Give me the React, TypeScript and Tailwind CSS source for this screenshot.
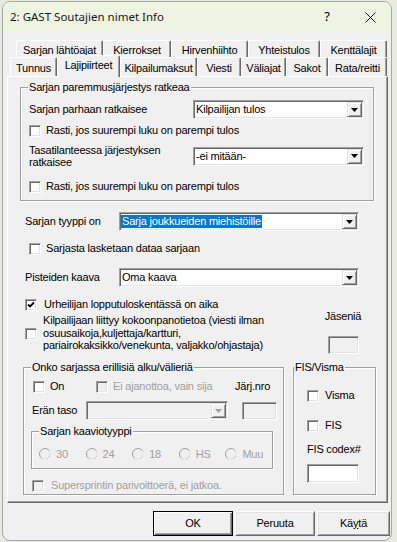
import React from 'react';

const ui = "font-['Liberation_Sans',Arial,sans-serif] text-[11px] tracking-[-0.2px] text-black";

const sunken =
    'border border-t-[#a0a0a0] border-l-[#a0a0a0] border-r-white border-b-white shadow-[inset_1px_1px_0_#696969,inset_-1px_-1px_0_#e3e3e3]';

interface CheckProps {
    checked?: boolean;
    disabled?: boolean;
}

const Check: React.FC<CheckProps> = ({ checked = false, disabled = false }) => (
    <span className={`flex h-[12px] w-[12px] shrink-0 items-center justify-center ${sunken} ${disabled ? 'bg-[#f0f0f0]' : 'bg-white'}`}>
        {checked && (
            <svg width="8" height="8" viewBox="0 0 8 8">
                <path d="M1 3.5l2 2 4-4" fill="none" stroke="#000" strokeWidth="1.8" />
            </svg>
        )}
    </span>
);

interface CheckRowProps extends CheckProps {
    label: string;
    gap: string;
    className?: string;
}

const CheckRow: React.FC<CheckRowProps> = ({ label, gap, className = '', checked, disabled }) => (
    <div className={`flex h-[13px] items-center ${className}`}>
        <Check checked={checked} disabled={disabled} />
        <span className={`${gap} whitespace-nowrap leading-[13px] ${disabled ? 'text-[#a0a0a0]' : ''}`}>{label}</span>
    </div>
);

const Radio: React.FC<{ label: string }> = ({ label }) => (
    <div className="flex w-[47px] items-center">
        <svg width="12" height="12" viewBox="0 0 12 12" className="shrink-0">
            <circle cx="6" cy="6" r="5.5" fill="#f0f0f0" stroke="#a0a0a0" />
            <path d="M10.2 2.6A5 5 0 0 1 2.6 10.2" fill="none" stroke="#fff" />
        </svg>
        <span className="ml-[5px] leading-[12px] text-[#a0a0a0]">{label}</span>
    </div>
);

interface ComboProps {
    text?: string;
    className: string;
    selected?: boolean;
    disabled?: boolean;
}

const Combo: React.FC<ComboProps> = ({ text, className, selected = false, disabled = false }) => (
    <div className={`flex h-[19px] shrink-0 p-px ${sunken} ${disabled ? 'bg-[#f0f0f0]' : 'bg-white'} ${className}`}>
        <div className="flex min-w-0 flex-1 items-center leading-[13px]">
            {text && <span className={`px-px ${selected ? 'bg-[#0078d7] text-white' : ''}`}>{text}</span>}
        </div>
        <div className="flex w-[15px] items-center justify-center border border-t-[#e3e3e3] border-l-[#e3e3e3] border-r-[#696969] border-b-[#696969] bg-[#f0f0f0] shadow-[inset_1px_1px_0_#fff,inset_-1px_-1px_0_#a0a0a0]">
            <svg width="7" height="4" viewBox="0 0 7 4">
                <path d="M0 0h7L3.5 4z" fill={disabled ? '#a0a0a0' : '#000'} />
            </svg>
        </div>
    </div>
);

interface GroupProps {
    title: string;
    className: string;
    legendClass: string;
    children: React.ReactNode;
}

const Group: React.FC<GroupProps> = ({ title, className, legendClass, children }) => (
    <fieldset className={`min-w-0 border border-[#a0a0a0] shadow-[inset_1px_1px_0_#fff,1px_1px_0_#fff] ${className}`}>
        <legend className={`bg-[#f0f0f0] px-px leading-[13px] ${legendClass}`}>{title}</legend>
        {children}
    </fieldset>
);

const Tab: React.FC<{ label: string; w: string; top: string }> = ({ label, w, top }) => (
    <div className={`flex h-full shrink-0 justify-center rounded-t-[2px] border-l border-t border-l-white border-t-white border-r border-r-[#696969] shadow-[inset_-1px_0_0_#a0a0a0] ${top} ${w}`}>
        <span className="whitespace-nowrap leading-[13px]">{label}</span>
    </div>
);

const Button: React.FC<{ children: React.ReactNode; w: string; isDefault?: boolean }> = ({ children, w, isDefault = false }) => (
    <button
        className={`flex h-[25px] items-center justify-center bg-[#f0f0f0] leading-[13px] ${w} ${
            isDefault
                ? 'border border-black shadow-[inset_1px_1px_0_#fff,inset_-1px_-1px_0_#696969,inset_-2px_-2px_0_#a0a0a0]'
                : 'border border-t-white border-l-white border-r-[#696969] border-b-[#696969] shadow-[inset_1px_1px_0_#e3e3e3,inset_-1px_-1px_0_#a0a0a0]'
        }`}
    >
        {children}
    </button>
);

export default function App() {
    const row1 = [
        { label: 'Sarjan lähtöajat', w: 'w-[87px]' },
        { label: 'Kierrokset', w: 'w-[68px]' },
        { label: 'Hirvenhiihto', w: 'w-[77px]' },
        { label: 'Yhteistulos', w: 'w-[72px]' },
        { label: 'Kenttälajit', w: 'w-[67px]' },
    ];
    const row2After = [
        { label: 'Kilpailumaksut', w: 'w-[77px]' },
        { label: 'Viesti', w: 'w-[44px]' },
        { label: 'Väliajat', w: 'w-[45px]' },
        { label: 'Sakot', w: 'w-[42px]' },
        { label: 'Rata/reitti', w: 'w-[59px]' },
    ];

    return (
        <div className={`h-[542px] w-[397px] overflow-hidden bg-[#e8eadf] pl-[2px] pt-px ${ui}`}>
            <div className="flex h-[540px] w-[390px] flex-col overflow-hidden rounded-[8px] border border-[#a8a8a8] bg-[#f0f0f0]">
                {/* Title bar */}
                <div className="flex h-[30px] shrink-0 items-center bg-[#eff3e2] tracking-normal">
                    <span className="flex-1 pl-[7px] font-['Noto_Sans',sans-serif] text-[11.5px] text-[#1a1a1a]">
                        2: GAST Soutajien nimet Info
                    </span>
                    <span className="w-[44px] text-center font-['Noto_Sans',sans-serif] text-[13px]">?</span>
                    <span className="flex w-[42px] justify-center">
                        <svg width="11" height="11" viewBox="0 0 11 11">
                            <path d="M0.5 0.5l10 10M10.5 0.5l-10 10" stroke="#1a1a1a" strokeWidth="1" />
                        </svg>
                    </span>
                </div>

                {/* Tabs */}
                <div className="ml-[13px] mt-[8px] flex h-[17px]">
                    {row1.map((t) => (
                        <Tab key={t.label} label={t.label} w={t.w} top="pt-[3px]" />
                    ))}
                </div>
                <div className="ml-[7px] flex h-[19px]">
                    <Tab label="Tunnus" w="w-[47px]" top="pt-[4px]" />
                    <div className="relative z-10 -mt-[2px] flex h-[22px] w-[63px] shrink-0 justify-center rounded-t-[2px] border-l border-t border-l-white border-t-white border-r border-r-[#696969] bg-[#f0f0f0] pt-[3px] shadow-[inset_-1px_0_0_#a0a0a0]">
                        <span className="whitespace-nowrap leading-[13px]">Lajipiirteet</span>
                    </div>
                    {row2After.map((t) => (
                        <Tab key={t.label} label={t.label} w={t.w} top="pt-[4px]" />
                    ))}
                </div>

                {/* Panel */}
                <div className="ml-[4px] flex h-[427px] w-[381px] flex-col items-start border border-l-white border-t-white border-r-[#696969] border-b-[#696969] shadow-[inset_-1px_-1px_0_#a0a0a0]">
                    <Group title="Sarjan paremmusjärjestys ratkeaa" className="ml-[12px] mt-[4px] w-[354px] pb-[7px]" legendClass="ml-[7px]">
                        <div className="mt-[6px] flex h-[19px] items-center pl-[8px]">
                            <span className="w-[164px] whitespace-nowrap">Sarjan parhaan ratkaisee</span>
                            <Combo text="Kilpailijan tulos" className="w-[171px]" />
                        </div>
                        <CheckRow label="Rasti, jos suurempi luku on parempi tulos" gap="ml-[5px]" className="ml-[8px] mt-[5px]" />
                        <div className="mt-[7px] flex h-[24px] items-center pl-[8px]">
                            <span className="w-[164px] leading-[12px]">
                                Tasatilanteessa järjestyksen
                                <br />
                                ratkaisee
                            </span>
                            <Combo text="-ei mitään-" className="w-[171px]" />
                        </div>
                        <CheckRow label="Rasti, jos suurempi luku on parempi tulos" gap="ml-[5px]" className="ml-[8px] mt-[12px]" />
                    </Group>

                    <div className="ml-[17px] mt-[11px] flex h-[19px] items-center">
                        <span className="w-[94px] whitespace-nowrap">Sarjan tyyppi on</span>
                        <Combo text="Sarja joukkueiden miehistöille" className="w-[240px]" selected />
                    </div>

                    <CheckRow label="Sarjasta lasketaan dataa sarjaan" gap="ml-[5px]" className="ml-[21px] mt-[11px]" />

                    <div className="ml-[17px] mt-[13px] flex h-[19px] items-center">
                        <span className="w-[94px] whitespace-nowrap">Pisteiden kaava</span>
                        <Combo text="Oma kaava" className="w-[240px]" />
                    </div>

                    <CheckRow label="Urheilijan lopputuloskentässä on aika" checked gap="ml-[7px]" className="ml-[17px] mt-[11px]" />

                    <div className="-mt-px ml-[17px] flex">
                        <div className="mt-[18px] self-start">
                            <Check />
                        </div>
                        <span className="ml-[6px] w-[280px] whitespace-nowrap pt-[4px] leading-[12.5px]">
                            Kilpailijaan liittyy kokoonpanotietoa (viesti ilman
                            <br />
                            osuusaikoja,kuljettaja/kartturi,
                            <br />
                            pariairokaksikko/venekunta, valjakko/ohjastaja)
                        </span>
                        <div className="flex w-[40px] flex-col items-center">
                            <span className="leading-[13px]">Jäseniä</span>
                            <div className={`mt-[13px] h-[18px] w-[31px] bg-[#f0f0f0] ${sunken}`} />
                        </div>
                    </div>

                    <div className="ml-[15px] mt-[7px] flex">
                        <Group title="Onko sarjassa erillisiä alku/välieriä" className="w-[261px] pb-[2px]" legendClass="ml-[7px]">
                            <div className="mt-[6px] flex h-[13px] items-center pl-[9px]">
                                <CheckRow label="On" gap="ml-[5px]" className="w-[63px]" />
                                <CheckRow label="Ei ajanottoa, vain sija" gap="ml-[5px]" className="w-[139px]" disabled />
                                <span className="whitespace-nowrap leading-[13px]">Järj.nro</span>
                            </div>
                            <div className="mt-[8px] flex h-[19px] items-center pl-[8px]">
                                <span className="w-[54px] whitespace-nowrap">Erän taso</span>
                                <Combo className="w-[142px]" disabled />
                                <div className={`ml-[14px] h-[18px] w-[35px] bg-[#f0f0f0] ${sunken}`} />
                            </div>
                            <Group title="Sarjan kaaviotyyppi" className="ml-[7px] mt-[5px] w-[242px] pb-[8px]" legendClass="ml-[7px]">
                                <div className="mt-[10px] flex h-[12px] pl-[7px]">
                                    <Radio label="30" />
                                    <Radio label="24" />
                                    <Radio label="18" />
                                    <Radio label="HS" />
                                    <Radio label="Muu" />
                                </div>
                            </Group>
                            <CheckRow label="Supersprintin parivoittoerä, ei jatkoa." gap="ml-[7px]" className="mt-[10px] pl-[8px]" disabled />
                        </Group>

                        <Group title="FIS/Visma" className="ml-[9px] w-[83px]" legendClass="ml-0">
                            <CheckRow label="Visma" gap="ml-[6px]" className="mt-[15px] pl-[13px]" />
                            <CheckRow label="FIS" gap="ml-[6px]" className="mt-[17px] pl-[13px]" />
                            <div className="mt-[11px] whitespace-nowrap pl-[13px] leading-[13px]">FIS codex#</div>
                            <div className={`ml-[13px] mt-[8px] h-[19px] w-[52px] bg-white ${sunken}`} />
                        </Group>
                    </div>
                </div>

                {/* Buttons */}
                <div className="ml-[150px] mt-[8px] flex gap-[2px]">
                    <Button w="w-[80px]" isDefault>
                        OK
                    </Button>
                    <Button w="w-[80px]">Peruuta</Button>
                    <Button w="w-[73px]">
                        Kä<span className="underline">y</span>tä
                    </Button>
                </div>
            </div>
        </div>
    );
}
